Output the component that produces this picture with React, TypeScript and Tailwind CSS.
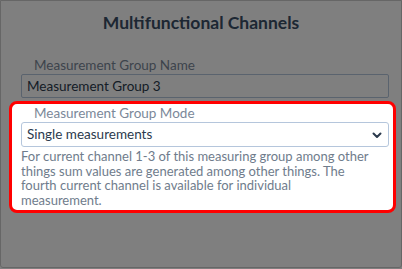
import { FC } from "react";

const ChevronDown: FC = () => (
  <svg width="12" height="12" viewBox="0 0 12 12" fill="none">
    <path d="M2.5 4.5 L6 8 L9.5 4.5" stroke="#2b3a4d" strokeWidth="2" strokeLinecap="round" strokeLinejoin="round" />
  </svg>
);

const App: FC = () => {
  return (
    <div
      className="relative w-[402px] h-[269px] bg-white overflow-hidden"
      style={{ fontFamily: "Lato, 'Noto Sans', sans-serif" }}
    >
      <div className="h-[268px] border border-[#cccccc] rounded-b-[3px] bg-white">
        {/* Title */}
        <h2 className="text-center text-[17.5px] font-bold text-[#3b4e66] pt-[9px] leading-[26px]">
          Multifunctional Channels
        </h2>

        {/* Name field */}
        <div className="mt-[20px] px-[20px] pr-[12px]">
          <label className="block pl-[13px] text-[13.5px] leading-[18px] text-[#7b8899]">
            Measurement Group Name
          </label>
          <div className="h-[24px] border border-[#b5c6dc] rounded-[2px] px-[5px] text-[13.5px] leading-[22px] text-[#2b3a4d]">
            Measurement Group 3
          </div>
        </div>

        {/* Mode field (highlighted) */}
        <div className="relative z-20 mt-[3px] mx-[8px] mr-[5px] border-[3px] border-[#ff0000] rounded-[8px] bg-white pl-[9px] pr-[4px] pt-[0px] pb-[3px]">
          <label className="block pl-[13px] text-[13.5px] leading-[18px] text-[#7b8899]">
            Measurement Group Mode
          </label>
          <div className="h-[25px] flex items-center justify-between border border-[#b5c6dc] rounded-[3px] pl-[5px] pr-[5px] text-[13.5px] text-[#2b3a4d]">
            <span>Single measurements</span>
            <ChevronDown />
          </div>
          <p className="mt-[2px] w-[362px] text-[13px] leading-[14.5px] text-[#6f7c8c]">
            For current channel 1-3 of this measuring group among other things sum values are generated among other things. The fourth current channel is available for individual
            <br />
            measurement.
          </p>
        </div>
      </div>

      {/* Overlay */}
      <div className="absolute inset-0 z-10 bg-black/50" />
    </div>
  );
};

export default App;
